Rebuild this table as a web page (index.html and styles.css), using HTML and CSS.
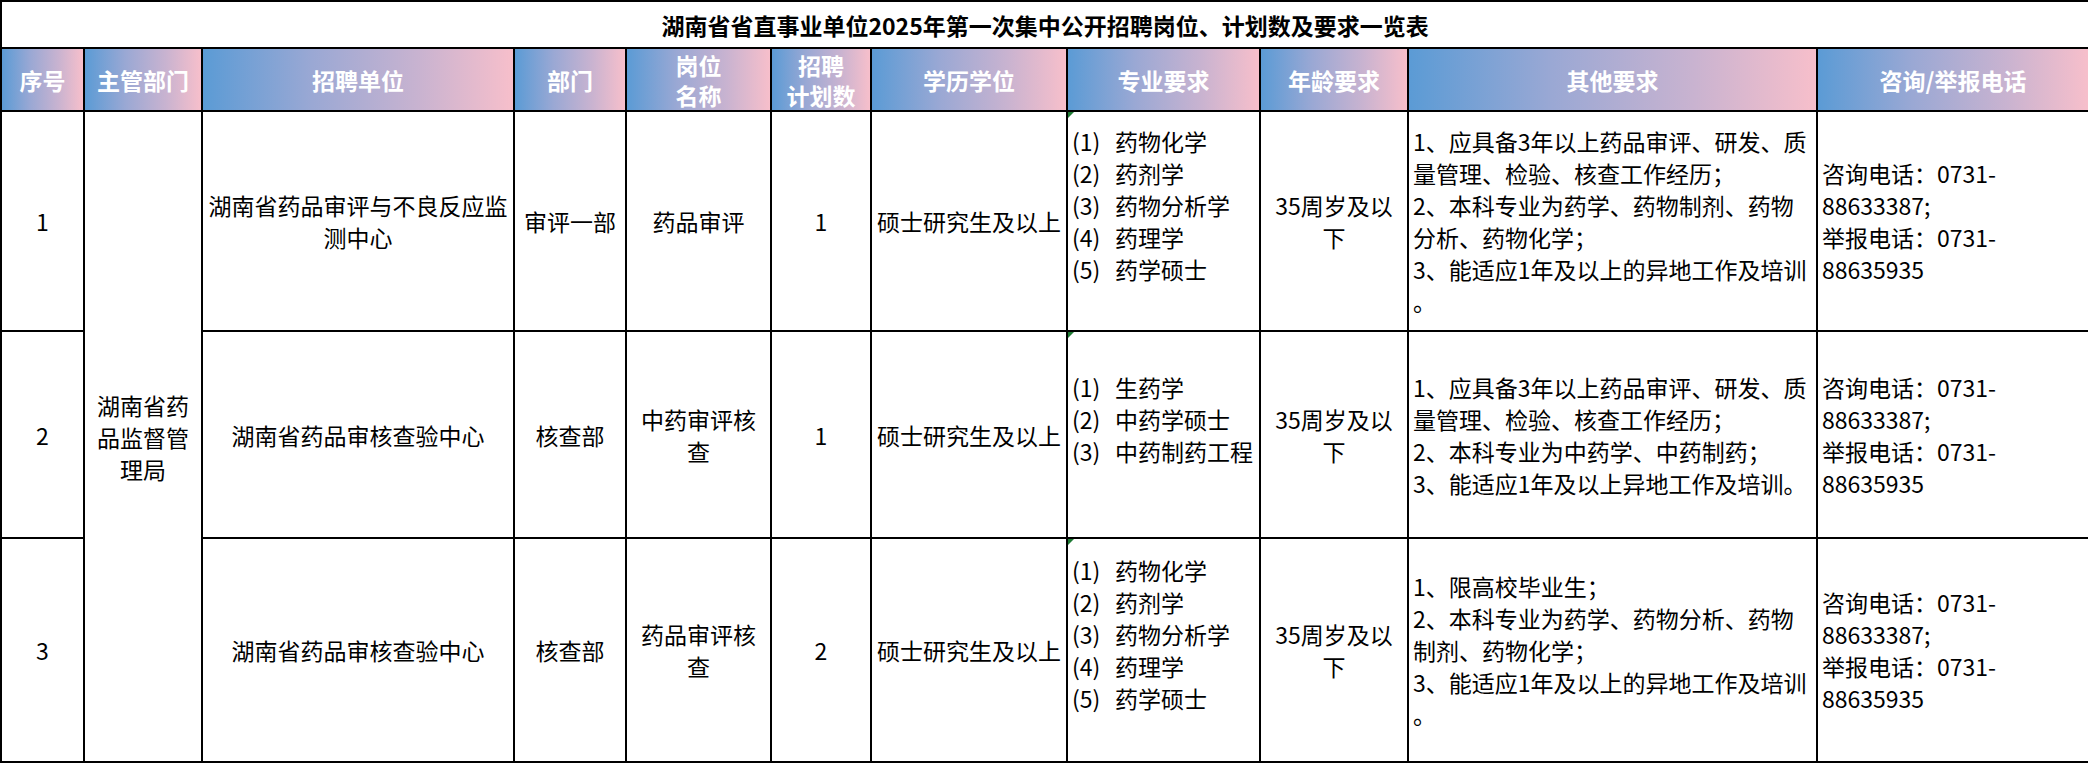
FILE: index.html
```html
<!DOCTYPE html>
<html lang="zh-CN">
<head>
<meta charset="utf-8">
<title>湖南省省直事业单位2025年第一次集中公开招聘岗位、计划数及要求一览表</title>
<link rel="stylesheet" href="styles.css">
</head>
<body>
<table class="sheet">
  <colgroup>
    <col class="w-no">
    <col class="w-dept">
    <col class="w-unit">
    <col class="w-sub">
    <col class="w-post">
    <col class="w-num">
    <col class="w-edu">
    <col class="w-major">
    <col class="w-age">
    <col class="w-other">
    <col class="w-tel">
  </colgroup>
  <tr class="row-title">
    <td colspan="11" class="title">湖南省省直事业单位2025年第一次集中公开招聘岗位、计划数及要求一览表</td>
  </tr>
  <tr class="row-head">
    <th>序号</th>
    <th>主管部门</th>
    <th>招聘单位</th>
    <th>部门</th>
    <th>岗位<br>名称</th>
    <th>招聘<br>计划数</th>
    <th>学历学位</th>
    <th>专业要求</th>
    <th>年龄要求</th>
    <th>其他要求</th>
    <th>咨询/举报电话</th>
  </tr>
  <tr class="row-1">
    <td>1</td>
    <td rowspan="3">湖南省药<br>品监督管<br>理局</td>
    <td>湖南省药品审评与不良反应监<br>测中心</td>
    <td>审评一部</td>
    <td>药品审评</td>
    <td>1</td>
    <td>硕士研究生及以上</td>
    <td class="left major">
      <span class="lbl">(1)</span>药物化学<br>
      <span class="lbl">(2)</span>药剂学<br>
      <span class="lbl">(3)</span>药物分析学<br>
      <span class="lbl">(4)</span>药理学<br>
      <span class="lbl">(5)</span>药学硕士<br>
      <span class="blank">&nbsp;</span>
    </td>
    <td>35周岁及以<br>下</td>
    <td class="left">1、应具备3年以上药品审评、研发、质<br>量管理、检验、核查工作经历；<br>2、本科专业为药学、药物制剂、药物<br>分析、药物化学；<br>3、能适应1年及以上的异地工作及培训<br>。</td>
    <td class="left">咨询电话：0731-<br>88633387;<br>举报电话：0731-<br>88635935</td>
  </tr>
  <tr class="row-2">
    <td>2</td>
    <td>湖南省药品审核查验中心</td>
    <td>核查部</td>
    <td>中药审评核<br>查</td>
    <td>1</td>
    <td>硕士研究生及以上</td>
    <td class="left major">
      <span class="lbl">(1)</span>生药学<br>
      <span class="lbl">(2)</span>中药学硕士<br>
      <span class="lbl">(3)</span>中药制药工程<br>
      <span class="blank">&nbsp;</span>
    </td>
    <td>35周岁及以<br>下</td>
    <td class="left">1、应具备3年以上药品审评、研发、质<br>量管理、检验、核查工作经历；<br>2、本科专业为中药学、中药制药；<br>3、能适应1年及以上异地工作及培训。</td>
    <td class="left">咨询电话：0731-<br>88633387;<br>举报电话：0731-<br>88635935</td>
  </tr>
  <tr class="row-3">
    <td>3</td>
    <td>湖南省药品审核查验中心</td>
    <td>核查部</td>
    <td>药品审评核<br>查</td>
    <td>2</td>
    <td>硕士研究生及以上</td>
    <td class="left major">
      <span class="lbl">(1)</span>药物化学<br>
      <span class="lbl">(2)</span>药剂学<br>
      <span class="lbl">(3)</span>药物分析学<br>
      <span class="lbl">(4)</span>药理学<br>
      <span class="lbl">(5)</span>药学硕士<br>
      <span class="blank">&nbsp;</span>
    </td>
    <td>35周岁及以<br>下</td>
    <td class="left">1、限高校毕业生；<br>2、本科专业为药学、药物分析、药物<br>制剂、药物化学；<br>3、能适应1年及以上的异地工作及培训<br>。</td>
    <td class="left">咨询电话：0731-<br>88633387;<br>举报电话：0731-<br>88635935</td>
  </tr>
</table>
</body>
</html>
```

FILE: styles.css
```css
html, body {
  margin: 0;
  padding: 0;
  background: #ffffff;
}

.sheet {
  border-collapse: collapse;
  table-layout: fixed;
  width: 2088px;
  font-family: "Noto Sans CJK SC", "Microsoft YaHei", sans-serif;
  font-size: 23px;
  line-height: 32px;
  color: #000000;
}

.w-no { width: 83px; }
.w-dept { width: 118px; }
.w-unit { width: 312px; }
.w-sub { width: 112px; }
.w-post { width: 145px; }
.w-num { width: 100px; }
.w-edu { width: 196px; }
.w-major { width: 193px; }
.w-age { width: 148px; }
.w-other { width: 409px; }
.w-tel { width: 272px; }

.sheet td,
.sheet th {
  border: 2px solid #000000;
  padding: 0;
  text-align: center;
  vertical-align: middle;
  white-space: nowrap;
  overflow: hidden;
}

.row-title { height: 47px; }
.row-head { height: 63px; }
.row-1 { height: 220px; }
.row-2 { height: 207px; }
.row-3 { height: 224px; }

.title {
  font-weight: 700;
  color: #000000;
}

.row-head th {
  font-weight: 700;
  line-height: 30px;
  color: #ffffff;
  background: linear-gradient(90deg, #5b9bd5 0%, #9aa8d4 35%, #c9b3d0 70%, #f7bfcb 100%);
}

.sheet td.left {
  text-align: left;
  padding-left: 4px;
}

.major {
  position: relative;
}

.major::before {
  content: "";
  position: absolute;
  left: 0;
  top: 0;
  border-top: 6px solid #1e7b34;
  border-right: 6px solid transparent;
}

.lbl {
  display: inline-block;
  width: 43px;
}

.blank {
  display: inline-block;
}
```
